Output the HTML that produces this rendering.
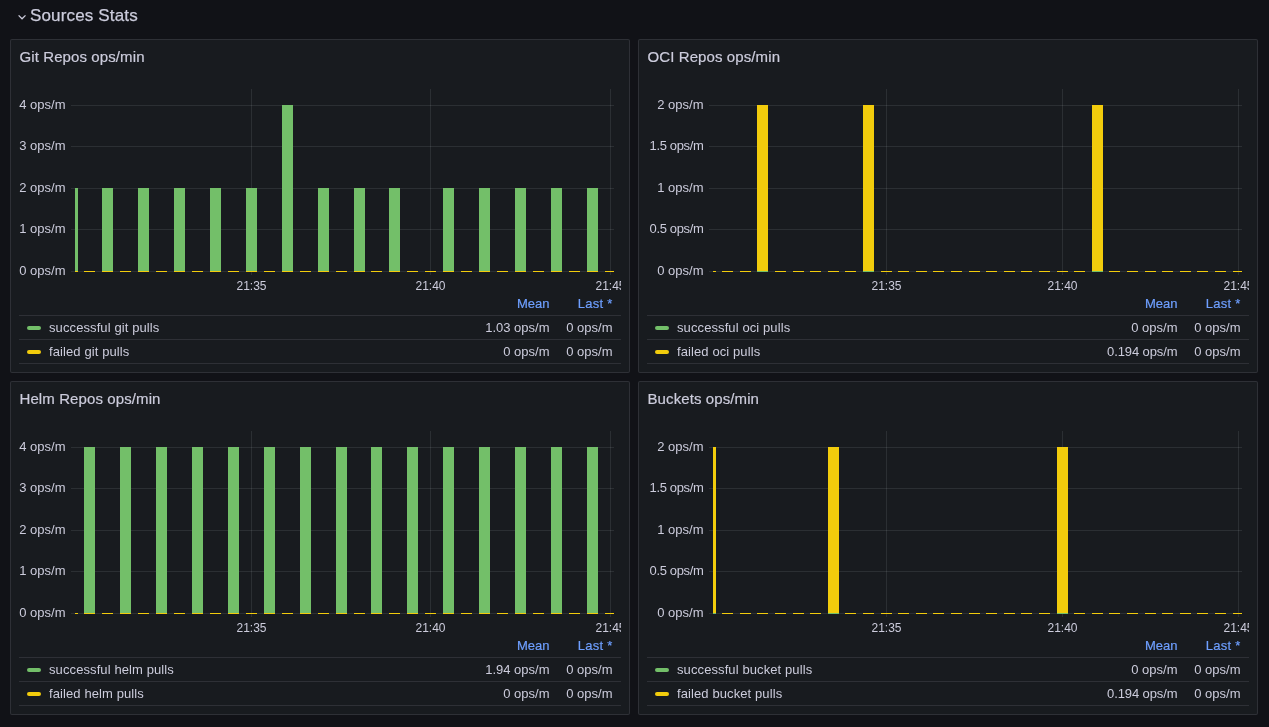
<!DOCTYPE html>
<html><head><meta charset="utf-8"><style>
html,body{margin:0;padding:0;width:1269px;height:727px;overflow:hidden;background:#111217;}
body{position:relative;font-family:"Liberation Sans", sans-serif;}
.p{position:absolute;width:618px;height:332px;background:#181b1f;border:1px solid rgba(204,204,220,0.12);border-radius:2px;}
.t{position:absolute;white-space:nowrap;}
#tx{position:absolute;left:0;top:0;width:1269px;height:727px;will-change:transform;}
svg{position:absolute;left:0;top:0;}
</style></head><body>
<div class="p" style="left:10px;top:39px"></div><div class="p" style="left:638px;top:39px"></div><div class="p" style="left:10px;top:381px"></div><div class="p" style="left:638px;top:381px"></div>
<svg width="1269" height="727" viewBox="0 0 1269 727" shape-rendering="crispEdges">
<path d="M18.6 15.4 L22.05 18.75 L25.5 15.4" stroke="#ccccdc" stroke-width="1.3" fill="none" shape-rendering="geometricPrecision"/><rect x="71" y="105" width="543" height="1" fill="rgba(240,250,255,0.09)" /><rect x="71" y="146" width="543" height="1" fill="rgba(240,250,255,0.09)" /><rect x="71" y="188" width="543" height="1" fill="rgba(240,250,255,0.09)" /><rect x="71" y="229" width="543" height="1" fill="rgba(240,250,255,0.09)" /><rect x="71" y="271" width="543" height="1" fill="rgba(240,250,255,0.09)" /><rect x="251" y="89" width="1" height="186" fill="rgba(240,250,255,0.09)" /><rect x="430" y="89" width="1" height="186" fill="rgba(240,250,255,0.09)" /><rect x="610" y="89" width="1" height="186" fill="rgba(240,250,255,0.09)" /><clipPath id="c0"><rect x="75" y="0" width="539" height="727"/></clipPath><g clip-path="url(#c0)"><rect x="67" y="188" width="11" height="84" fill="#73bf69"/><rect x="102" y="188" width="11" height="84" fill="#73bf69"/><rect x="138" y="188" width="11" height="84" fill="#73bf69"/><rect x="174" y="188" width="11" height="84" fill="#73bf69"/><rect x="210" y="188" width="11" height="84" fill="#73bf69"/><rect x="246" y="188" width="11" height="84" fill="#73bf69"/><rect x="282" y="105" width="11" height="167" fill="#73bf69"/><rect x="318" y="188" width="11" height="84" fill="#73bf69"/><rect x="354" y="188" width="11" height="84" fill="#73bf69"/><rect x="389" y="188" width="11" height="84" fill="#73bf69"/><rect x="443" y="188" width="11" height="84" fill="#73bf69"/><rect x="479" y="188" width="11" height="84" fill="#73bf69"/><rect x="515" y="188" width="11" height="84" fill="#73bf69"/><rect x="551" y="188" width="11" height="84" fill="#73bf69"/><rect x="587" y="188" width="11" height="84" fill="#73bf69"/><rect x="67" y="271" width="11" height="1" fill="#f2cc0c"/><rect x="84" y="271" width="11" height="1" fill="#f2cc0c"/><rect x="102" y="271" width="11" height="1" fill="#f2cc0c"/><rect x="120" y="271" width="11" height="1" fill="#f2cc0c"/><rect x="138" y="271" width="11" height="1" fill="#f2cc0c"/><rect x="156" y="271" width="11" height="1" fill="#f2cc0c"/><rect x="174" y="271" width="11" height="1" fill="#f2cc0c"/><rect x="192" y="271" width="11" height="1" fill="#f2cc0c"/><rect x="210" y="271" width="11" height="1" fill="#f2cc0c"/><rect x="228" y="271" width="11" height="1" fill="#f2cc0c"/><rect x="246" y="271" width="11" height="1" fill="#f2cc0c"/><rect x="264" y="271" width="11" height="1" fill="#f2cc0c"/><rect x="282" y="271" width="11" height="1" fill="#f2cc0c"/><rect x="300" y="271" width="11" height="1" fill="#f2cc0c"/><rect x="318" y="271" width="11" height="1" fill="#f2cc0c"/><rect x="336" y="271" width="11" height="1" fill="#f2cc0c"/><rect x="354" y="271" width="11" height="1" fill="#f2cc0c"/><rect x="371" y="271" width="11" height="1" fill="#f2cc0c"/><rect x="389" y="271" width="11" height="1" fill="#f2cc0c"/><rect x="407" y="271" width="11" height="1" fill="#f2cc0c"/><rect x="425" y="271" width="11" height="1" fill="#f2cc0c"/><rect x="443" y="271" width="11" height="1" fill="#f2cc0c"/><rect x="461" y="271" width="11" height="1" fill="#f2cc0c"/><rect x="479" y="271" width="11" height="1" fill="#f2cc0c"/><rect x="497" y="271" width="11" height="1" fill="#f2cc0c"/><rect x="515" y="271" width="11" height="1" fill="#f2cc0c"/><rect x="533" y="271" width="11" height="1" fill="#f2cc0c"/><rect x="551" y="271" width="11" height="1" fill="#f2cc0c"/><rect x="569" y="271" width="11" height="1" fill="#f2cc0c"/><rect x="587" y="271" width="11" height="1" fill="#f2cc0c"/><rect x="605" y="271" width="11" height="1" fill="#f2cc0c"/></g><rect x="19" y="315" width="602" height="1" fill="rgba(204,204,220,0.12)" /><rect x="19" y="339" width="602" height="1" fill="rgba(204,204,220,0.12)" /><rect x="19" y="363" width="602" height="1" fill="rgba(204,204,220,0.12)" /><rect x="27" y="326" width="14" height="4" rx="2" fill="#73bf69" shape-rendering="geometricPrecision"/><rect x="27" y="350" width="14" height="4" rx="2" fill="#f2cc0c" shape-rendering="geometricPrecision"/><rect x="709" y="105" width="533" height="1" fill="rgba(240,250,255,0.09)" /><rect x="709" y="146" width="533" height="1" fill="rgba(240,250,255,0.09)" /><rect x="709" y="188" width="533" height="1" fill="rgba(240,250,255,0.09)" /><rect x="709" y="229" width="533" height="1" fill="rgba(240,250,255,0.09)" /><rect x="709" y="271" width="533" height="1" fill="rgba(240,250,255,0.09)" /><rect x="886" y="89" width="1" height="186" fill="rgba(240,250,255,0.09)" /><rect x="1062" y="89" width="1" height="186" fill="rgba(240,250,255,0.09)" /><rect x="1238" y="89" width="1" height="186" fill="rgba(240,250,255,0.09)" /><clipPath id="c1"><rect x="713" y="0" width="529" height="727"/></clipPath><g clip-path="url(#c1)"><rect x="705" y="271" width="11" height="1" fill="#f2cc0c"/><rect x="722" y="271" width="11" height="1" fill="#f2cc0c"/><rect x="740" y="271" width="11" height="1" fill="#f2cc0c"/><rect x="757" y="105" width="11" height="167" fill="#f2cc0c"/><rect x="757" y="271" width="11" height="1" fill="#73bf69"/><rect x="775" y="271" width="11" height="1" fill="#f2cc0c"/><rect x="793" y="271" width="11" height="1" fill="#f2cc0c"/><rect x="810" y="271" width="11" height="1" fill="#f2cc0c"/><rect x="828" y="271" width="11" height="1" fill="#f2cc0c"/><rect x="845" y="271" width="11" height="1" fill="#f2cc0c"/><rect x="863" y="105" width="11" height="167" fill="#f2cc0c"/><rect x="863" y="271" width="11" height="1" fill="#73bf69"/><rect x="881" y="271" width="11" height="1" fill="#f2cc0c"/><rect x="898" y="271" width="11" height="1" fill="#f2cc0c"/><rect x="916" y="271" width="11" height="1" fill="#f2cc0c"/><rect x="933" y="271" width="11" height="1" fill="#f2cc0c"/><rect x="951" y="271" width="11" height="1" fill="#f2cc0c"/><rect x="969" y="271" width="11" height="1" fill="#f2cc0c"/><rect x="986" y="271" width="11" height="1" fill="#f2cc0c"/><rect x="1004" y="271" width="11" height="1" fill="#f2cc0c"/><rect x="1021" y="271" width="11" height="1" fill="#f2cc0c"/><rect x="1039" y="271" width="11" height="1" fill="#f2cc0c"/><rect x="1057" y="271" width="11" height="1" fill="#f2cc0c"/><rect x="1074" y="271" width="11" height="1" fill="#f2cc0c"/><rect x="1092" y="105" width="11" height="167" fill="#f2cc0c"/><rect x="1092" y="271" width="11" height="1" fill="#73bf69"/><rect x="1109" y="271" width="11" height="1" fill="#f2cc0c"/><rect x="1127" y="271" width="11" height="1" fill="#f2cc0c"/><rect x="1145" y="271" width="11" height="1" fill="#f2cc0c"/><rect x="1162" y="271" width="11" height="1" fill="#f2cc0c"/><rect x="1180" y="271" width="11" height="1" fill="#f2cc0c"/><rect x="1197" y="271" width="11" height="1" fill="#f2cc0c"/><rect x="1215" y="271" width="11" height="1" fill="#f2cc0c"/><rect x="1233" y="271" width="11" height="1" fill="#f2cc0c"/></g><rect x="647" y="315" width="602" height="1" fill="rgba(204,204,220,0.12)" /><rect x="647" y="339" width="602" height="1" fill="rgba(204,204,220,0.12)" /><rect x="647" y="363" width="602" height="1" fill="rgba(204,204,220,0.12)" /><rect x="655" y="326" width="14" height="4" rx="2" fill="#73bf69" shape-rendering="geometricPrecision"/><rect x="655" y="350" width="14" height="4" rx="2" fill="#f2cc0c" shape-rendering="geometricPrecision"/><rect x="71" y="447" width="543" height="1" fill="rgba(240,250,255,0.09)" /><rect x="71" y="488" width="543" height="1" fill="rgba(240,250,255,0.09)" /><rect x="71" y="530" width="543" height="1" fill="rgba(240,250,255,0.09)" /><rect x="71" y="571" width="543" height="1" fill="rgba(240,250,255,0.09)" /><rect x="71" y="613" width="543" height="1" fill="rgba(240,250,255,0.09)" /><rect x="251" y="431" width="1" height="186" fill="rgba(240,250,255,0.09)" /><rect x="430" y="431" width="1" height="186" fill="rgba(240,250,255,0.09)" /><rect x="610" y="431" width="1" height="186" fill="rgba(240,250,255,0.09)" /><clipPath id="c2"><rect x="75" y="0" width="539" height="727"/></clipPath><g clip-path="url(#c2)"><rect x="84" y="447" width="11" height="167" fill="#73bf69"/><rect x="120" y="447" width="11" height="167" fill="#73bf69"/><rect x="156" y="447" width="11" height="167" fill="#73bf69"/><rect x="192" y="447" width="11" height="167" fill="#73bf69"/><rect x="228" y="447" width="11" height="167" fill="#73bf69"/><rect x="264" y="447" width="11" height="167" fill="#73bf69"/><rect x="300" y="447" width="11" height="167" fill="#73bf69"/><rect x="336" y="447" width="11" height="167" fill="#73bf69"/><rect x="371" y="447" width="11" height="167" fill="#73bf69"/><rect x="407" y="447" width="11" height="167" fill="#73bf69"/><rect x="443" y="447" width="11" height="167" fill="#73bf69"/><rect x="479" y="447" width="11" height="167" fill="#73bf69"/><rect x="515" y="447" width="11" height="167" fill="#73bf69"/><rect x="551" y="447" width="11" height="167" fill="#73bf69"/><rect x="587" y="447" width="11" height="167" fill="#73bf69"/><rect x="67" y="613" width="11" height="1" fill="#f2cc0c"/><rect x="84" y="613" width="11" height="1" fill="#f2cc0c"/><rect x="102" y="613" width="11" height="1" fill="#f2cc0c"/><rect x="120" y="613" width="11" height="1" fill="#f2cc0c"/><rect x="138" y="613" width="11" height="1" fill="#f2cc0c"/><rect x="156" y="613" width="11" height="1" fill="#f2cc0c"/><rect x="174" y="613" width="11" height="1" fill="#f2cc0c"/><rect x="192" y="613" width="11" height="1" fill="#f2cc0c"/><rect x="210" y="613" width="11" height="1" fill="#f2cc0c"/><rect x="228" y="613" width="11" height="1" fill="#f2cc0c"/><rect x="246" y="613" width="11" height="1" fill="#f2cc0c"/><rect x="264" y="613" width="11" height="1" fill="#f2cc0c"/><rect x="282" y="613" width="11" height="1" fill="#f2cc0c"/><rect x="300" y="613" width="11" height="1" fill="#f2cc0c"/><rect x="318" y="613" width="11" height="1" fill="#f2cc0c"/><rect x="336" y="613" width="11" height="1" fill="#f2cc0c"/><rect x="354" y="613" width="11" height="1" fill="#f2cc0c"/><rect x="371" y="613" width="11" height="1" fill="#f2cc0c"/><rect x="389" y="613" width="11" height="1" fill="#f2cc0c"/><rect x="407" y="613" width="11" height="1" fill="#f2cc0c"/><rect x="425" y="613" width="11" height="1" fill="#f2cc0c"/><rect x="443" y="613" width="11" height="1" fill="#f2cc0c"/><rect x="461" y="613" width="11" height="1" fill="#f2cc0c"/><rect x="479" y="613" width="11" height="1" fill="#f2cc0c"/><rect x="497" y="613" width="11" height="1" fill="#f2cc0c"/><rect x="515" y="613" width="11" height="1" fill="#f2cc0c"/><rect x="533" y="613" width="11" height="1" fill="#f2cc0c"/><rect x="551" y="613" width="11" height="1" fill="#f2cc0c"/><rect x="569" y="613" width="11" height="1" fill="#f2cc0c"/><rect x="587" y="613" width="11" height="1" fill="#f2cc0c"/><rect x="605" y="613" width="11" height="1" fill="#f2cc0c"/></g><rect x="19" y="657" width="602" height="1" fill="rgba(204,204,220,0.12)" /><rect x="19" y="681" width="602" height="1" fill="rgba(204,204,220,0.12)" /><rect x="19" y="705" width="602" height="1" fill="rgba(204,204,220,0.12)" /><rect x="27" y="668" width="14" height="4" rx="2" fill="#73bf69" shape-rendering="geometricPrecision"/><rect x="27" y="692" width="14" height="4" rx="2" fill="#f2cc0c" shape-rendering="geometricPrecision"/><rect x="709" y="447" width="533" height="1" fill="rgba(240,250,255,0.09)" /><rect x="709" y="488" width="533" height="1" fill="rgba(240,250,255,0.09)" /><rect x="709" y="530" width="533" height="1" fill="rgba(240,250,255,0.09)" /><rect x="709" y="571" width="533" height="1" fill="rgba(240,250,255,0.09)" /><rect x="709" y="613" width="533" height="1" fill="rgba(240,250,255,0.09)" /><rect x="886" y="431" width="1" height="186" fill="rgba(240,250,255,0.09)" /><rect x="1062" y="431" width="1" height="186" fill="rgba(240,250,255,0.09)" /><rect x="1238" y="431" width="1" height="186" fill="rgba(240,250,255,0.09)" /><clipPath id="c3"><rect x="713" y="0" width="529" height="727"/></clipPath><g clip-path="url(#c3)"><rect x="705" y="447" width="11" height="167" fill="#f2cc0c"/><rect x="705" y="613" width="11" height="1" fill="#73bf69"/><rect x="722" y="613" width="11" height="1" fill="#f2cc0c"/><rect x="740" y="613" width="11" height="1" fill="#f2cc0c"/><rect x="757" y="613" width="11" height="1" fill="#f2cc0c"/><rect x="775" y="613" width="11" height="1" fill="#f2cc0c"/><rect x="793" y="613" width="11" height="1" fill="#f2cc0c"/><rect x="810" y="613" width="11" height="1" fill="#f2cc0c"/><rect x="828" y="447" width="11" height="167" fill="#f2cc0c"/><rect x="828" y="613" width="11" height="1" fill="#73bf69"/><rect x="845" y="613" width="11" height="1" fill="#f2cc0c"/><rect x="863" y="613" width="11" height="1" fill="#f2cc0c"/><rect x="881" y="613" width="11" height="1" fill="#f2cc0c"/><rect x="898" y="613" width="11" height="1" fill="#f2cc0c"/><rect x="916" y="613" width="11" height="1" fill="#f2cc0c"/><rect x="933" y="613" width="11" height="1" fill="#f2cc0c"/><rect x="951" y="613" width="11" height="1" fill="#f2cc0c"/><rect x="969" y="613" width="11" height="1" fill="#f2cc0c"/><rect x="986" y="613" width="11" height="1" fill="#f2cc0c"/><rect x="1004" y="613" width="11" height="1" fill="#f2cc0c"/><rect x="1021" y="613" width="11" height="1" fill="#f2cc0c"/><rect x="1039" y="613" width="11" height="1" fill="#f2cc0c"/><rect x="1057" y="447" width="11" height="167" fill="#f2cc0c"/><rect x="1057" y="613" width="11" height="1" fill="#73bf69"/><rect x="1074" y="613" width="11" height="1" fill="#f2cc0c"/><rect x="1092" y="613" width="11" height="1" fill="#f2cc0c"/><rect x="1109" y="613" width="11" height="1" fill="#f2cc0c"/><rect x="1127" y="613" width="11" height="1" fill="#f2cc0c"/><rect x="1145" y="613" width="11" height="1" fill="#f2cc0c"/><rect x="1162" y="613" width="11" height="1" fill="#f2cc0c"/><rect x="1180" y="613" width="11" height="1" fill="#f2cc0c"/><rect x="1197" y="613" width="11" height="1" fill="#f2cc0c"/><rect x="1215" y="613" width="11" height="1" fill="#f2cc0c"/><rect x="1233" y="613" width="11" height="1" fill="#f2cc0c"/></g><rect x="647" y="657" width="602" height="1" fill="rgba(204,204,220,0.12)" /><rect x="647" y="681" width="602" height="1" fill="rgba(204,204,220,0.12)" /><rect x="647" y="705" width="602" height="1" fill="rgba(204,204,220,0.12)" /><rect x="655" y="668" width="14" height="4" rx="2" fill="#73bf69" shape-rendering="geometricPrecision"/><rect x="655" y="692" width="14" height="4" rx="2" fill="#f2cc0c" shape-rendering="geometricPrecision"/>
</svg>
<div id="tx"><div class="t" style="top:6.61px;font-size:17px;line-height:17px;color:#ccccdc;letter-spacing:0.15px;-webkit-text-stroke:0.25px #ccccdc;left:30.00px;">Sources Stats</div><div class="t" style="top:49.10px;font-size:15px;line-height:15px;color:#ccccdc;letter-spacing:0.1px;-webkit-text-stroke:0.2px #ccccdc;left:19.50px;">Git Repos ops/min</div><div class="t" style="top:98.00px;font-size:13px;line-height:13px;color:#ccccdc;right:1203.50px;">4 ops/m</div><div class="t" style="top:139.00px;font-size:13px;line-height:13px;color:#ccccdc;right:1203.50px;">3 ops/m</div><div class="t" style="top:181.00px;font-size:13px;line-height:13px;color:#ccccdc;right:1203.50px;">2 ops/m</div><div class="t" style="top:222.00px;font-size:13px;line-height:13px;color:#ccccdc;right:1203.50px;">1 ops/m</div><div class="t" style="top:264.00px;font-size:13px;line-height:13px;color:#ccccdc;right:1203.50px;">0 ops/m</div><div class="t" style="top:279.84px;font-size:12px;line-height:12px;color:#ccccdc;left:151.50px;width:200px;text-align:center;clip-path:inset(0 -269.50px 0 0);">21:35</div><div class="t" style="top:279.84px;font-size:12px;line-height:12px;color:#ccccdc;left:330.50px;width:200px;text-align:center;clip-path:inset(0 -90.50px 0 0);">21:40</div><div class="t" style="top:279.84px;font-size:12px;line-height:12px;color:#ccccdc;left:510.50px;width:200px;text-align:center;clip-path:inset(0 89.50px 0 0);">21:45</div><div class="t" style="top:297.00px;font-size:13px;line-height:13px;color:#6e9fff;-webkit-text-stroke:0.2px #6e9fff;right:719.50px;">Mean</div><div class="t" style="top:297.00px;font-size:13px;line-height:13px;color:#6e9fff;letter-spacing:0.25px;-webkit-text-stroke:0.2px #6e9fff;right:656.50px;">Last *</div><div class="t" style="top:321.00px;font-size:13px;line-height:13px;color:#ccccdc;letter-spacing:0.1px;left:49.00px;">successful git pulls</div><div class="t" style="top:321.00px;font-size:13px;line-height:13px;color:#ccccdc;right:719.50px;">1.03 ops/m</div><div class="t" style="top:321.00px;font-size:13px;line-height:13px;color:#ccccdc;right:656.50px;">0 ops/m</div><div class="t" style="top:345.00px;font-size:13px;line-height:13px;color:#ccccdc;letter-spacing:0.1px;left:49.00px;">failed git pulls</div><div class="t" style="top:345.00px;font-size:13px;line-height:13px;color:#ccccdc;right:719.50px;">0 ops/m</div><div class="t" style="top:345.00px;font-size:13px;line-height:13px;color:#ccccdc;right:656.50px;">0 ops/m</div><div class="t" style="top:49.10px;font-size:15px;line-height:15px;color:#ccccdc;letter-spacing:0.1px;-webkit-text-stroke:0.2px #ccccdc;left:647.50px;">OCI Repos ops/min</div><div class="t" style="top:98.00px;font-size:13px;line-height:13px;color:#ccccdc;right:565.50px;">2 ops/m</div><div class="t" style="top:139.00px;font-size:13px;line-height:13px;color:#ccccdc;letter-spacing:-0.35px;right:565.50px;">1.5 ops/m</div><div class="t" style="top:181.00px;font-size:13px;line-height:13px;color:#ccccdc;right:565.50px;">1 ops/m</div><div class="t" style="top:222.00px;font-size:13px;line-height:13px;color:#ccccdc;letter-spacing:-0.35px;right:565.50px;">0.5 ops/m</div><div class="t" style="top:264.00px;font-size:13px;line-height:13px;color:#ccccdc;right:565.50px;">0 ops/m</div><div class="t" style="top:279.84px;font-size:12px;line-height:12px;color:#ccccdc;left:786.50px;width:200px;text-align:center;clip-path:inset(0 -262.50px 0 0);">21:35</div><div class="t" style="top:279.84px;font-size:12px;line-height:12px;color:#ccccdc;left:962.50px;width:200px;text-align:center;clip-path:inset(0 -86.50px 0 0);">21:40</div><div class="t" style="top:279.84px;font-size:12px;line-height:12px;color:#ccccdc;left:1138.50px;width:200px;text-align:center;clip-path:inset(0 89.50px 0 0);">21:45</div><div class="t" style="top:297.00px;font-size:13px;line-height:13px;color:#6e9fff;-webkit-text-stroke:0.2px #6e9fff;right:91.50px;">Mean</div><div class="t" style="top:297.00px;font-size:13px;line-height:13px;color:#6e9fff;letter-spacing:0.25px;-webkit-text-stroke:0.2px #6e9fff;right:28.50px;">Last *</div><div class="t" style="top:321.00px;font-size:13px;line-height:13px;color:#ccccdc;letter-spacing:0.1px;left:677.00px;">successful oci pulls</div><div class="t" style="top:321.00px;font-size:13px;line-height:13px;color:#ccccdc;right:91.50px;">0 ops/m</div><div class="t" style="top:321.00px;font-size:13px;line-height:13px;color:#ccccdc;right:28.50px;">0 ops/m</div><div class="t" style="top:345.00px;font-size:13px;line-height:13px;color:#ccccdc;letter-spacing:0.1px;left:677.00px;">failed oci pulls</div><div class="t" style="top:345.00px;font-size:13px;line-height:13px;color:#ccccdc;letter-spacing:-0.1px;right:91.50px;">0.194 ops/m</div><div class="t" style="top:345.00px;font-size:13px;line-height:13px;color:#ccccdc;right:28.50px;">0 ops/m</div><div class="t" style="top:391.10px;font-size:15px;line-height:15px;color:#ccccdc;letter-spacing:0.1px;-webkit-text-stroke:0.2px #ccccdc;left:19.50px;">Helm Repos ops/min</div><div class="t" style="top:440.00px;font-size:13px;line-height:13px;color:#ccccdc;right:1203.50px;">4 ops/m</div><div class="t" style="top:481.00px;font-size:13px;line-height:13px;color:#ccccdc;right:1203.50px;">3 ops/m</div><div class="t" style="top:523.00px;font-size:13px;line-height:13px;color:#ccccdc;right:1203.50px;">2 ops/m</div><div class="t" style="top:564.00px;font-size:13px;line-height:13px;color:#ccccdc;right:1203.50px;">1 ops/m</div><div class="t" style="top:606.00px;font-size:13px;line-height:13px;color:#ccccdc;right:1203.50px;">0 ops/m</div><div class="t" style="top:621.84px;font-size:12px;line-height:12px;color:#ccccdc;left:151.50px;width:200px;text-align:center;clip-path:inset(0 -269.50px 0 0);">21:35</div><div class="t" style="top:621.84px;font-size:12px;line-height:12px;color:#ccccdc;left:330.50px;width:200px;text-align:center;clip-path:inset(0 -90.50px 0 0);">21:40</div><div class="t" style="top:621.84px;font-size:12px;line-height:12px;color:#ccccdc;left:510.50px;width:200px;text-align:center;clip-path:inset(0 89.50px 0 0);">21:45</div><div class="t" style="top:639.00px;font-size:13px;line-height:13px;color:#6e9fff;-webkit-text-stroke:0.2px #6e9fff;right:719.50px;">Mean</div><div class="t" style="top:639.00px;font-size:13px;line-height:13px;color:#6e9fff;letter-spacing:0.25px;-webkit-text-stroke:0.2px #6e9fff;right:656.50px;">Last *</div><div class="t" style="top:663.00px;font-size:13px;line-height:13px;color:#ccccdc;letter-spacing:0.1px;left:49.00px;">successful helm pulls</div><div class="t" style="top:663.00px;font-size:13px;line-height:13px;color:#ccccdc;right:719.50px;">1.94 ops/m</div><div class="t" style="top:663.00px;font-size:13px;line-height:13px;color:#ccccdc;right:656.50px;">0 ops/m</div><div class="t" style="top:687.00px;font-size:13px;line-height:13px;color:#ccccdc;letter-spacing:0.1px;left:49.00px;">failed helm pulls</div><div class="t" style="top:687.00px;font-size:13px;line-height:13px;color:#ccccdc;right:719.50px;">0 ops/m</div><div class="t" style="top:687.00px;font-size:13px;line-height:13px;color:#ccccdc;right:656.50px;">0 ops/m</div><div class="t" style="top:391.10px;font-size:15px;line-height:15px;color:#ccccdc;letter-spacing:0.1px;-webkit-text-stroke:0.2px #ccccdc;left:647.50px;">Buckets ops/min</div><div class="t" style="top:440.00px;font-size:13px;line-height:13px;color:#ccccdc;right:565.50px;">2 ops/m</div><div class="t" style="top:481.00px;font-size:13px;line-height:13px;color:#ccccdc;letter-spacing:-0.35px;right:565.50px;">1.5 ops/m</div><div class="t" style="top:523.00px;font-size:13px;line-height:13px;color:#ccccdc;right:565.50px;">1 ops/m</div><div class="t" style="top:564.00px;font-size:13px;line-height:13px;color:#ccccdc;letter-spacing:-0.35px;right:565.50px;">0.5 ops/m</div><div class="t" style="top:606.00px;font-size:13px;line-height:13px;color:#ccccdc;right:565.50px;">0 ops/m</div><div class="t" style="top:621.84px;font-size:12px;line-height:12px;color:#ccccdc;left:786.50px;width:200px;text-align:center;clip-path:inset(0 -262.50px 0 0);">21:35</div><div class="t" style="top:621.84px;font-size:12px;line-height:12px;color:#ccccdc;left:962.50px;width:200px;text-align:center;clip-path:inset(0 -86.50px 0 0);">21:40</div><div class="t" style="top:621.84px;font-size:12px;line-height:12px;color:#ccccdc;left:1138.50px;width:200px;text-align:center;clip-path:inset(0 89.50px 0 0);">21:45</div><div class="t" style="top:639.00px;font-size:13px;line-height:13px;color:#6e9fff;-webkit-text-stroke:0.2px #6e9fff;right:91.50px;">Mean</div><div class="t" style="top:639.00px;font-size:13px;line-height:13px;color:#6e9fff;letter-spacing:0.25px;-webkit-text-stroke:0.2px #6e9fff;right:28.50px;">Last *</div><div class="t" style="top:663.00px;font-size:13px;line-height:13px;color:#ccccdc;letter-spacing:0.1px;left:677.00px;">successful bucket pulls</div><div class="t" style="top:663.00px;font-size:13px;line-height:13px;color:#ccccdc;right:91.50px;">0 ops/m</div><div class="t" style="top:663.00px;font-size:13px;line-height:13px;color:#ccccdc;right:28.50px;">0 ops/m</div><div class="t" style="top:687.00px;font-size:13px;line-height:13px;color:#ccccdc;letter-spacing:0.1px;left:677.00px;">failed bucket pulls</div><div class="t" style="top:687.00px;font-size:13px;line-height:13px;color:#ccccdc;letter-spacing:-0.1px;right:91.50px;">0.194 ops/m</div><div class="t" style="top:687.00px;font-size:13px;line-height:13px;color:#ccccdc;right:28.50px;">0 ops/m</div></div>
</body></html>
